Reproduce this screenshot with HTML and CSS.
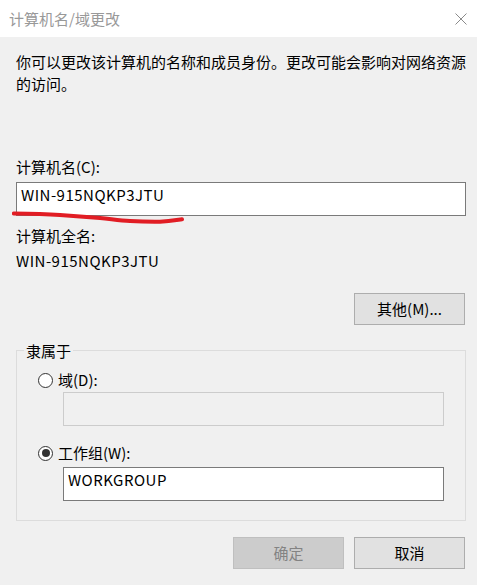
FILE: index.html
```html
<!DOCTYPE html>
<html lang="zh-CN">
<head>
<meta charset="utf-8">
<title>计算机名/域更改</title>
<link rel="stylesheet" href="styles.css">
</head>
<body>
<div class="window">
  <header class="titlebar">
    <span class="title">计算机名/域更改</span>
    <svg class="close" width="12" height="12" viewBox="0 0 12 12" aria-hidden="true">
      <path d="M0.5 0.5 L11.5 11.5 M11.5 0.5 L0.5 11.5" stroke="#8a8a8a" stroke-width="1" fill="none"/>
    </svg>
  </header>
  <main class="content">
    <p class="intro">你可以更改该计算机的名称和成员身份。更改可能会影响对网络资源的访问。</p>

    <div class="label name-label">计算机名(C):</div>
    <div class="field-wrap">
      <div class="input latin">WIN-915NQKP3JTU</div>
      <svg class="scribble" width="176" height="16" viewBox="0 0 176 16" aria-hidden="true">
        <path d="M1.8 3.5 C20 3.6 35 4 48 5 C62 6 76 7 88 8 C100 9.2 108 10.5 118 11 C130 11.7 140 11.8 148 11.7 C158 11.5 165 10 170 9.3" stroke="#e11d24" stroke-width="4" stroke-linecap="round" fill="none"/>
      </svg>
    </div>

    <div class="label full-label">计算机全名:</div>
    <div class="value latin">WIN-915NQKP3JTU</div>

    <div class="more-row">
      <button class="btn">其他(M)...</button>
    </div>

    <section class="group">
      <div class="group-title">隶属于</div>
      <div class="radio-row domain-row">
        <span class="radio"></span>
        <span>域(D):</span>
      </div>
      <div class="input sub-input disabled domain-input"></div>
      <div class="radio-row workgroup-row">
        <span class="radio checked"></span>
        <span>工作组(W):</span>
      </div>
      <div class="input sub-input latin workgroup-input">WORKGROUP</div>
    </section>

    <div class="actions">
      <button class="btn btn-disabled">确定</button>
      <button class="btn">取消</button>
    </div>
  </main>
</div>
</body>
</html>
```

FILE: styles.css
```css
* { box-sizing: border-box; }

html, body {
  margin: 0;
  padding: 0;
}

body {
  background: #f0f0f0;
  font-family: "Noto Sans CJK SC", "Noto Sans", sans-serif;
  font-size: 15px;
  line-height: 22px;
  color: #000;
  width: 477px;
  height: 585px;
  overflow: hidden;
}

.titlebar {
  height: 37px;
  background: #fff;
  display: flex;
  align-items: center;
  justify-content: space-between;
  padding: 0 10px 0 9px;
}

.title {
  color: #999;
}

.close {
  display: block;
}

.content {
  padding: 14px 11px 0 16px;
}

.intro {
  margin: 0;
}

.name-label {
  margin-top: 61px;
}

.field-wrap {
  position: relative;
  margin-top: 4px;
}

.input {
  height: 34px;
  border: 1px solid #7a7a7a;
  background: #fff;
  padding: 1px 4px 0;
  line-height: 22px;
}

.latin {
  letter-spacing: 0.5px;
}

.scribble {
  position: absolute;
  left: -4px;
  top: 28px;
}

.full-label {
  margin-top: 9px;
}

.value {
  margin-top: 3px;
}

.more-row {
  display: flex;
  justify-content: flex-end;
  margin-top: 21px;
  padding-right: 1px;
}

.btn {
  width: 111px;
  height: 32px;
  border: 1px solid #adadad;
  background: #e1e1e1;
  font: inherit;
  color: #000;
  padding: 0;
  line-height: 20px;
}

.btn-disabled {
  background: #cccccc;
  border-color: #bfbfbf;
  color: #838383;
}

.group {
  margin-top: 25px;
  border: 1px solid #dcdcdc;
  padding: 0 21px 19px 21px;
}

.group-title {
  display: table;
  margin: -11px 0 0 -14px;
  padding: 0 2px;
  background: #f0f0f0;
}

.radio-row {
  display: flex;
  align-items: center;
  gap: 5px;
}

.domain-row {
  margin-top: 7px;
}

.workgroup-row {
  margin-top: 16px;
}

.radio {
  width: 15px;
  height: 15px;
  border: 1px solid #333;
  border-radius: 50%;
  background: #fff;
  display: flex;
  align-items: center;
  justify-content: center;
  flex: none;
}

.radio.checked::after {
  content: "";
  width: 8px;
  height: 8px;
  border-radius: 50%;
  background: #333;
}

.sub-input {
  margin-left: 25px;
  width: 381px;
}

.domain-input {
  margin-top: 1px;
}

.workgroup-input {
  margin-top: 3px;
}

.disabled {
  background: #f0f0f0;
  border-color: #cccccc;
}

.actions {
  display: flex;
  justify-content: flex-end;
  gap: 10px;
  margin-top: 16px;
  padding-right: 1px;
}
```
